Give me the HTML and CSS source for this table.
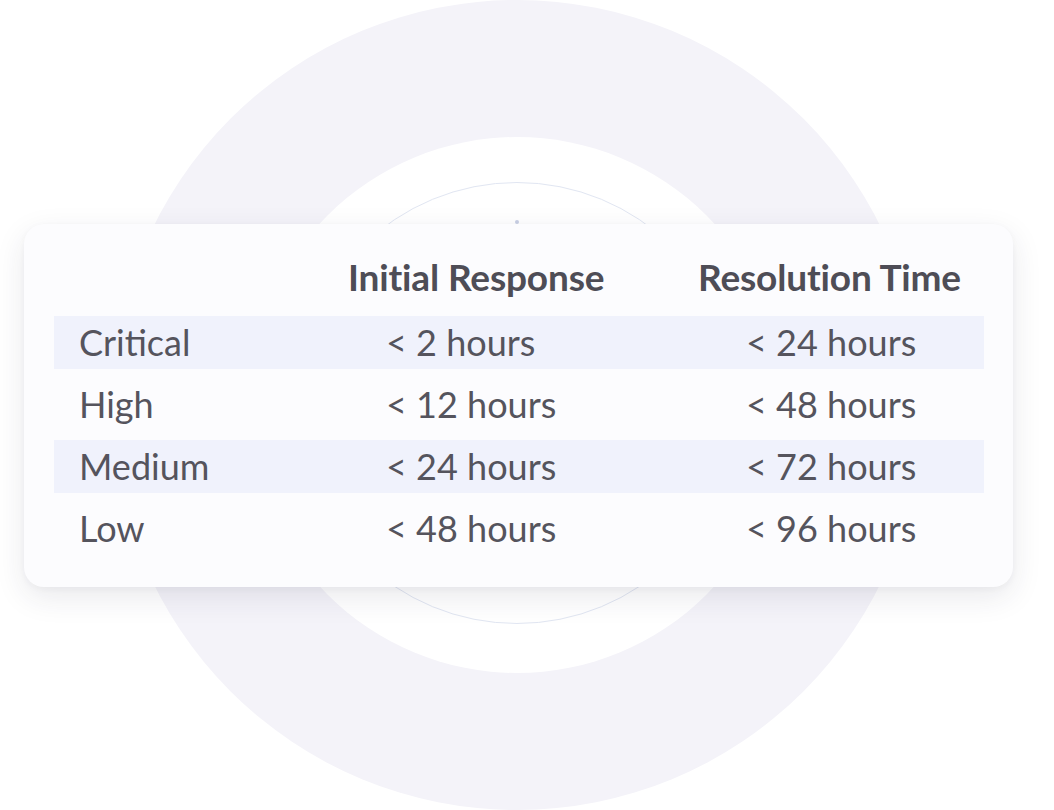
FILE: index.html
```html
<!DOCTYPE html>
<html lang="en">
<head>
<meta charset="utf-8">
<title>Support SLA</title>
<link rel="stylesheet" href="styles.css">
</head>
<body>
<div class="stage">
  <div class="backdrop">
    <div class="ring-outer"></div>
    <div class="ring-inner"></div>
    <div class="ring-line"></div>
    <div class="ring-dot"></div>
  </div>
  <section class="card">
    <div class="head">
      <span></span>
      <span class="th">Initial Response</span>
      <span class="th">Resolution Time</span>
    </div>
    <div class="rows">
      <div class="row stripe"><span class="lvl">Critical</span><span>&lt; 2 hours</span><span>&lt; 24 hours</span></div>
      <div class="row"><span class="lvl">High</span><span>&lt; 12 hours</span><span>&lt; 48 hours</span></div>
      <div class="row stripe"><span class="lvl">Medium</span><span>&lt; 24 hours</span><span>&lt; 72 hours</span></div>
      <div class="row"><span class="lvl">Low</span><span>&lt; 48 hours</span><span>&lt; 96 hours</span></div>
    </div>
  </section>
</div>
</body>
</html>
```

FILE: styles.css
```css
* { box-sizing: border-box; }
html, body { margin: 0; padding: 0; background: #ffffff; }
body { font-family: "Lato", "Liberation Sans", sans-serif; }

.stage {
  position: relative;
  width: 1054px;
  height: 810px;
  overflow: hidden;
  padding-top: 224px;
  padding-left: 24px;
}

.backdrop { position: absolute; inset: 0; z-index: 0; }
.ring-outer {
  position: absolute;
  left: 112px; top: 0;
  width: 810px; height: 810px;
  border-radius: 50%;
  background: #f4f3f9;
}
.ring-inner {
  position: absolute;
  left: 249px; top: 137px;
  width: 536px; height: 536px;
  border-radius: 50%;
  background: #ffffff;
}
.ring-line {
  position: absolute;
  left: 296px; top: 182px;
  width: 442px; height: 442px;
  border-radius: 50%;
  border: 1px solid #e1e6f2;
}
.ring-dot {
  position: absolute;
  left: 515px; top: 220px;
  width: 4px; height: 4px;
  border-radius: 50%;
  background: #c9d0e4;
}

.card {
  position: relative;
  z-index: 1;
  width: 989px;
  height: 363px;
  padding: 26px 29px 32px 30px;
  background: #fcfcfe;
  border-radius: 20px;
  box-shadow: 0 10px 30px rgba(40, 40, 70, 0.10), 0 2px 6px rgba(40, 40, 70, 0.04);
}

.head {
  display: grid;
  grid-template-columns: 294px 350px 1fr;
  height: 53px;
  line-height: 53px;
  margin-bottom: 13px;
  font-size: 37px;
  font-weight: 700;
  color: #4e4d56;
  letter-spacing: -0.15px;
}

.rows { display: flex; flex-direction: column; gap: 9px; }
.row {
  display: grid;
  grid-template-columns: 332px 360px 1fr;
  height: 53px;
  line-height: 53px;
  font-size: 36px;
  color: #55545d;
}
.row.stripe { background: #f0f2fc; }
.lvl { padding-left: 25px; }
```
